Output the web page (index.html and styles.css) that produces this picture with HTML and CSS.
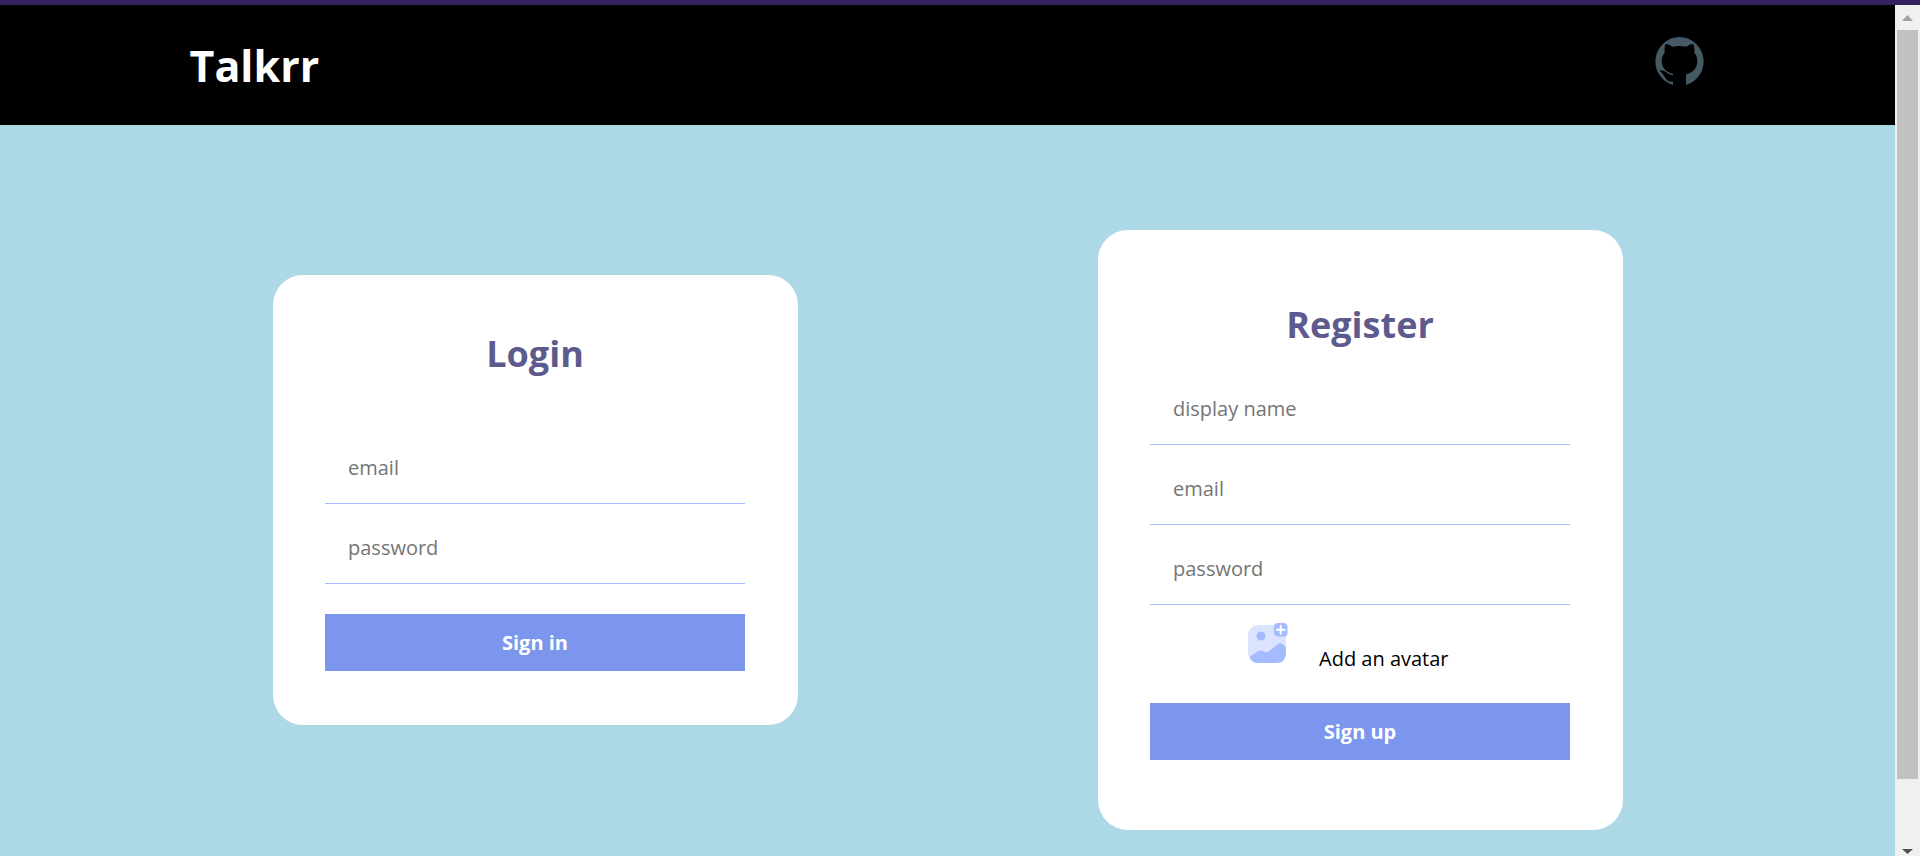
FILE: index.html
```html
<!DOCTYPE html>
<html lang="en">
<head>
<meta charset="utf-8">
<title>Talkrr</title>
<link rel="stylesheet" href="styles.css">
</head>
<body>
<div class="viewport">
  <div class="page">
    <header class="header">
      <h1 class="brand">Talkrr</h1>
      <a class="repo-link" href="#" aria-label="GitHub">
        <svg class="repo-icon" viewBox="0 0 49 49" aria-hidden="true">
          <path fill="#455a64" fill-rule="evenodd" d="M24.500 0A24.500 24.500 0 0 0 18 48V44.700C13.500 45.200 11.500 43 10 40.500C8.800 38.300 7.500 36.400 6 35.200C4.500 34.200 4.500 33.200 6 33.200C8.500 33.200 10 34.200 12 35.700C14 37.300 15.700 38 18 38.200V37C11 34.500 6.700 31 6.700 24C6.700 20.500 8 17.500 9.800 15.500C9.300 13 9.500 9.500 10.800 7C13.500 6.800 16 8.700 17.500 9.700C22 8.700 27 8.700 31.500 9.700C33 8.700 36 6.800 38.200 7C39.300 9.500 39.700 13 39.200 15.500C41.200 17.500 42.300 20.500 42.300 24C42.300 31 38 35.500 31 37.500V48A24.500 24.500 0 0 0 24.500 0Z"/>
        </svg>
      </a>
    </header>
    <main class="forms">
      <form class="card card-login">
        <h2 class="card-title">Login</h2>
        <div class="fields">
          <input class="field" type="email" placeholder="email" aria-label="email">
          <input class="field" type="password" placeholder="password" aria-label="password">
        </div>
        <button class="submit" type="button">Sign in</button>
      </form>
      <form class="card card-register">
        <h2 class="card-title">Register</h2>
        <div class="fields">
          <input class="field" type="text" placeholder="display name" aria-label="display name">
          <input class="field" type="email" placeholder="email" aria-label="email">
          <input class="field" type="password" placeholder="password" aria-label="password">
        </div>
        <input class="file" type="file" id="avatar">
        <label class="avatar" for="avatar">
          <svg class="avatar-icon" viewBox="0 0 44 44" aria-hidden="true">
            <rect x="2" y="5" width="38" height="38" rx="10" fill="#dbe4ff"/>
            <circle cx="15" cy="16" r="4.500" fill="#a6bbff"/>
            <path fill="#a6bbff" d="M3.500 37L11 31.800Q14.500 29.500 18 31.500Q21 33 24 30.500L32 24Q34.500 22.300 37 24.300L40 27V33Q40 43 30 43H12Q6 43 3.500 37Z"/>
            <rect x="28" y="3" width="13.500" height="13.500" rx="4" fill="#a6bbff"/>
            <path d="M34.700 5.800V13.800M30.700 9.800H38.700" stroke="#fff" stroke-width="2" stroke-linecap="round"/>
          </svg>
          <span>Add an avatar</span>
        </label>
        <button class="submit" type="button">Sign up</button>
      </form>
    </main>
  </div>
  <div class="scrollbar" aria-hidden="true">
    <svg class="arrow" viewBox="0 0 25 25"><path d="M7 16L12.500 10L18 16Z" fill="#a3a3a3"/></svg>
    <div class="track"><div class="thumb"></div></div>
    <svg class="arrow" viewBox="0 0 25 25"><path d="M7 18L12.500 23L18 18Z" fill="#505050"/></svg>
  </div>
</div>
</body>
</html>
```
FILE: styles.css
```css
* {
  box-sizing: border-box;
}

body {
  margin: 0;
  font-family: "Open Sans", sans-serif;
}

.viewport {
  display: flex;
  height: 100vh;
  overflow: hidden;
  border-top: 5px solid #33235e;
}

.page {
  flex: 1;
  background: #add8e6;
}

.header {
  display: flex;
  align-items: center;
  justify-content: space-between;
  height: 120px;
  padding: 0 10%;
  background: #000;
}

.brand {
  margin: 0;
  padding-top: 2px;
  font-size: 43px;
  line-height: 60px;
  color: #fff;
}

.repo-link {
  padding: 0 2px 8px 0;
}

.repo-icon {
  display: block;
  width: 49px;
  height: 49px;
}

.forms {
  display: flex;
  align-items: flex-start;
  justify-content: space-around;
  padding: 105px 122px 0 123px;
}

.card {
  display: flex;
  flex-direction: column;
  align-items: stretch;
  width: 525px;
  padding: 0 53px 0 52px;
  border-radius: 30px;
  background: #fff;
}

.card-login {
  margin-top: 45px;
  padding-top: 54px;
  padding-bottom: 54px;
}

.card-login .card-title {
  margin-bottom: 50px;
}

.card-login .submit {
  margin-top: 30px;
}

.card-register {
  padding-top: 70px;
  padding-bottom: 70px;
}

.card-title {
  margin: 0 0 20px;
  font-size: 36px;
  line-height: 49px;
  text-align: center;
  color: #5d5b8d;
}

.fields {
  display: flex;
  flex-direction: column;
  gap: 4px;
}

.field {
  width: 100%;
  height: 76px;
  padding: 3px 23px 0;
  border: 0;
  border-bottom: 1px solid #a7bcff;
  border-radius: 0;
  background: none;
  font: 20px "Open Sans", sans-serif;
}

.field::placeholder {
  color: #757575;
}

.file {
  display: none;
}

.avatar {
  display: flex;
  align-items: flex-end;
  gap: 29px;
  height: 98px;
  padding: 0 0 30px 96px;
  font-size: 20px;
  line-height: 28px;
}

.avatar-icon {
  width: 44px;
  height: 44px;
  margin-bottom: 9px;
}

.submit {
  height: 57px;
  border: 0;
  background: #7b96ec;
  color: #fff;
  font: bold 20px "Open Sans", sans-serif;
}

.scrollbar {
  display: flex;
  flex-direction: column;
  width: 25px;
  background: #f0f0f0;
}

.arrow {
  width: 25px;
  height: 25px;
}

.track {
  flex: 1;
  padding: 0 2px;
}

.thumb {
  height: 93.5%;
  background: #c1c1c1;
}
```
